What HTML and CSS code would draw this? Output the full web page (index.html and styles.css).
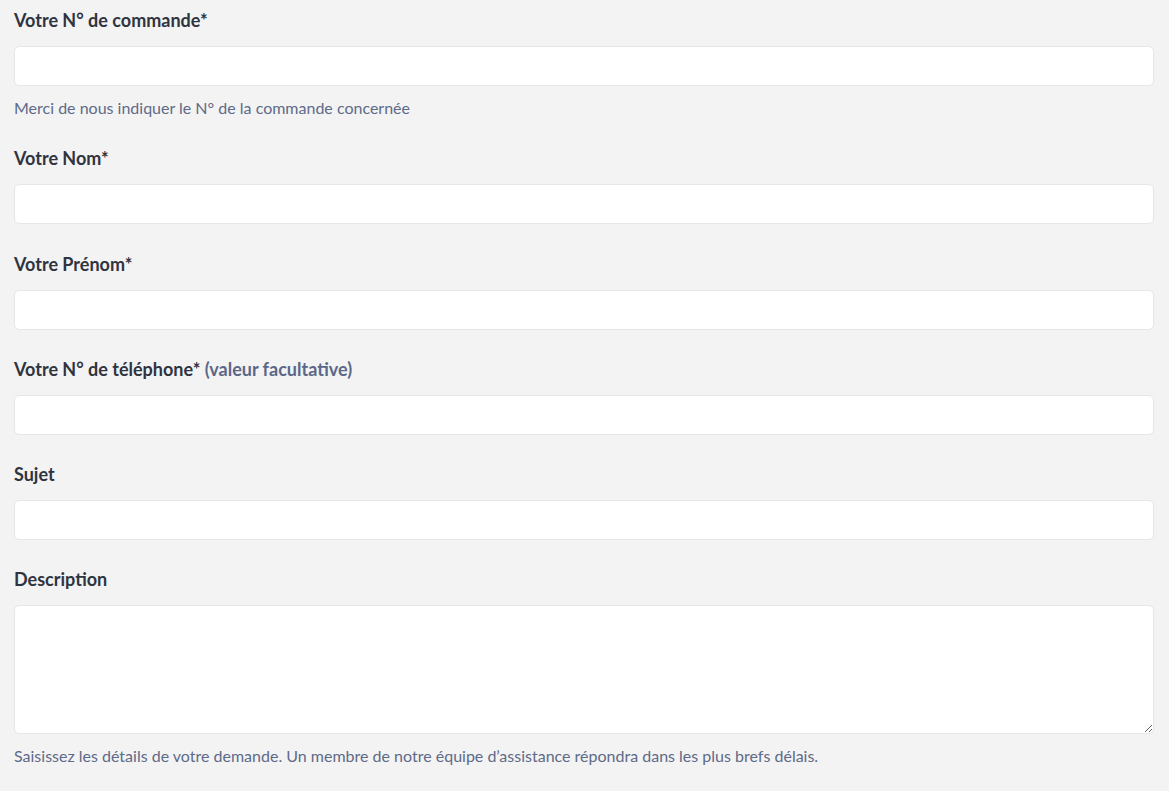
FILE: index.html
```html
<!DOCTYPE html>
<html lang="fr">
<head>
<meta charset="utf-8">
<title>Formulaire</title>
<link rel="stylesheet" href="styles.css">
</head>
<body>
<form class="form">
  <div class="field">
    <label class="label" for="f1">Votre N° de commande*</label>
    <input class="input" id="f1" type="text">
    <p class="hint">Merci de nous indiquer le N° de la commande concernée</p>
  </div>
  <div class="field">
    <label class="label" for="f2">Votre Nom*</label>
    <input class="input" id="f2" type="text">
  </div>
  <div class="field">
    <label class="label" for="f3">Votre Prénom*</label>
    <input class="input" id="f3" type="text">
  </div>
  <div class="field">
    <label class="label" for="f4">Votre N° de téléphone* <span class="optional">(valeur facultative)</span></label>
    <input class="input" id="f4" type="text">
  </div>
  <div class="field">
    <label class="label" for="f5">Sujet</label>
    <input class="input" id="f5" type="text">
  </div>
  <div class="field">
    <label class="label" for="f6">Description</label>
    <textarea class="input textarea" id="f6"></textarea>
    <p class="hint">Saisissez les détails de votre demande. Un membre de notre équipe d’assistance répondra dans les plus brefs délais.</p>
  </div>
</form>
</body>
</html>
```

FILE: styles.css
```css
html, body {
  margin: 0;
  padding: 0;
  background: #f3f3f3;
}
body {
  font-family: Lato, "Noto Sans", sans-serif;
  color: #2f3440;
}
.form {
  display: flex;
  flex-direction: column;
  padding: 8px 15px 0 14px;
}
.field {
  display: flex;
  flex-direction: column;
  margin-bottom: 27.3px;
}
.label {
  font-size: 18px;
  font-weight: 700;
  line-height: 24px;
  margin-bottom: 14px;
  color: #2f3440;
}
.optional {
  color: #5b6788;
}
.input {
  box-sizing: border-box;
  height: 40px;
  width: 100%;
  margin: 0;
  background: #ffffff;
  border: 1px solid #e6e6e6;
  border-radius: 5px;
  font-family: inherit;
  font-size: 15px;
  padding: 8px 10px;
  outline: none;
}
.textarea {
  height: 129px;
  resize: vertical;
  display: block;
}
.hint {
  margin: 11px 0 0;
  font-size: 16px;
  line-height: 22px;
  color: #5e6a88;
}
.hint-last {
  margin-top: 12px;
}
```
